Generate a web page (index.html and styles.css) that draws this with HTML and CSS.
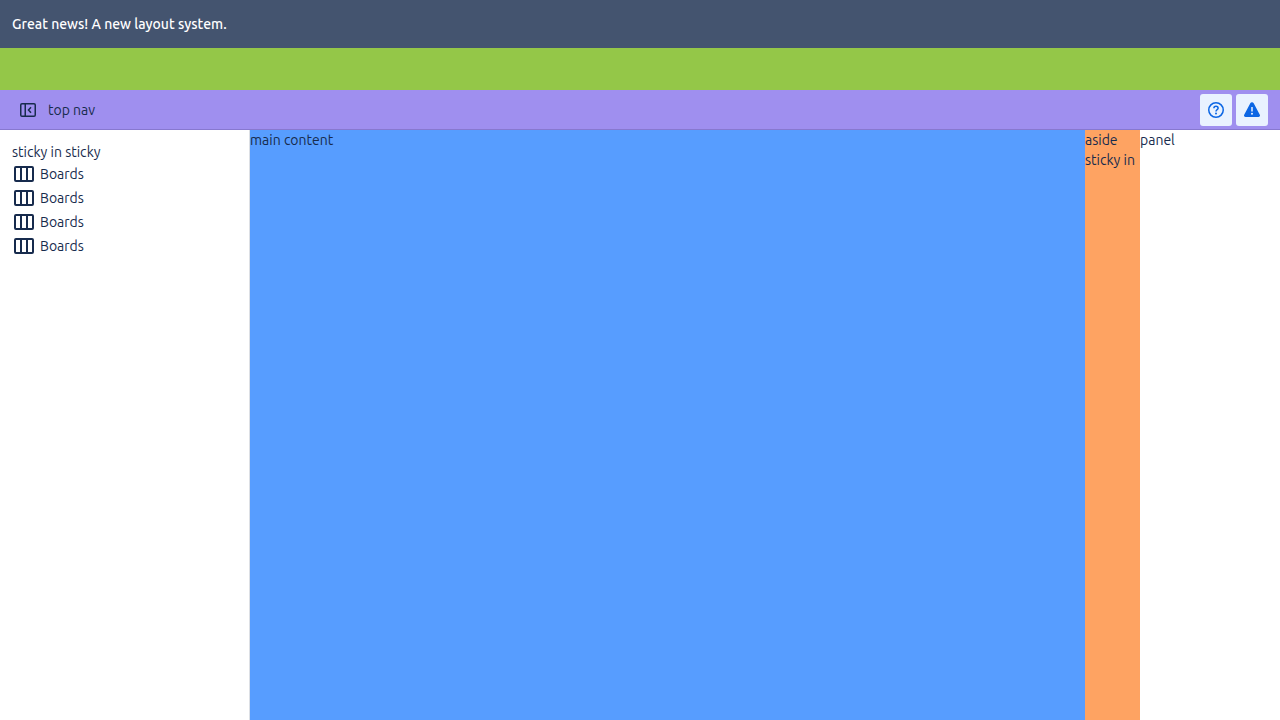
FILE: index.html
```html
<!DOCTYPE html>
<html lang="en">
<head>
<meta charset="utf-8">
<meta name="viewport" content="width=device-width, initial-scale=1">
<title>Layout system</title>
<link rel="stylesheet" href="styles.css">
</head>
<body>
<div class="page">
  <div class="banner">Great news! A new layout system.</div>
  <div class="announcement"></div>
  <header class="top-nav">
    <div class="nav-start">
      <button class="toggle" type="button" aria-label="Collapse side nav">
        <svg width="16" height="16" viewBox="0 0 16 16" fill="none" stroke="currentColor" stroke-width="1.5"><rect x=".75" y="1.75" width="14.5" height="12.5" rx="1.25"/><path d="M5.25 2v12M11 5.300 8.500 8l2.500 2.700"/></svg>
      </button>
      <span>top nav</span>
    </div>
    <div class="nav-end">
      <button class="action" type="button" aria-label="Help">
        <svg width="16" height="16" viewBox="0 0 16 16" fill="none" stroke="currentColor" stroke-width="1.5"><circle cx="8" cy="8" r="7.25"/><path d="M5.900 6.300C5.900 5 6.800 4.200 8 4.200s2.100.8 2.100 2C10.100 7.600 8 7.700 8 9.400"/><circle cx="8" cy="11.500" r="1" fill="currentColor" stroke="none"/></svg>
      </button>
      <button class="action" type="button" aria-label="Alerts">
        <svg width="16" height="16" viewBox="0 0 16 16"><path fill="currentColor" fill-rule="evenodd" d="M6.300 1.200a1.950 1.950 0 0 1 3.400 0l6.100 11.600a1.500 1.500 0 0 1-1.300 2.200H1.500a1.500 1.500 0 0 1-1.300-2.200ZM7.250 5v4.500h1.500V5ZM8 10.700a1 1 0 1 0 0 2 1 1 0 0 0 0-2Z"/></svg>
      </button>
    </div>
  </header>
  <div class="body">
    <nav class="side-nav">
      <div>sticky in sticky</div>
      <ul class="boards">
        <li class="board"><svg class="board-icon" viewBox="0 0 24 24" fill="none" stroke="currentColor" stroke-width="2"><rect x="3" y="5" width="18" height="14" rx="1"/><path d="M9 5v14M15 5v14"/></svg>Boards</li>
        <li class="board"><svg class="board-icon" viewBox="0 0 24 24" fill="none" stroke="currentColor" stroke-width="2"><rect x="3" y="5" width="18" height="14" rx="1"/><path d="M9 5v14M15 5v14"/></svg>Boards</li>
        <li class="board"><svg class="board-icon" viewBox="0 0 24 24" fill="none" stroke="currentColor" stroke-width="2"><rect x="3" y="5" width="18" height="14" rx="1"/><path d="M9 5v14M15 5v14"/></svg>Boards</li>
        <li class="board"><svg class="board-icon" viewBox="0 0 24 24" fill="none" stroke="currentColor" stroke-width="2"><rect x="3" y="5" width="18" height="14" rx="1"/><path d="M9 5v14M15 5v14"/></svg>Boards</li>
      </ul>
    </nav>
    <main class="main">main content</main>
    <aside class="aside">aside<br>sticky in</aside>
    <section class="panel">panel</section>
  </div>
</div>
</body>
</html>
```
FILE: styles.css
```css
* {
  box-sizing: border-box;
}

body {
  margin: 0;
  background: #ffffff;
  color: #172b4d;
  font-family: Ubuntu, "Noto Sans", "Open Sans", sans-serif;
  font-size: 14px;
  line-height: 20px;
}

.page {
  display: flex;
  flex-direction: column;
  min-height: 100vh;
}

.banner {
  padding: 14px 12px;
  background: #44546f;
  color: #ffffff;
  font-weight: 500;
}

.announcement {
  height: 42px;
  background: #94c748;
}

.top-nav {
  display: flex;
  align-items: center;
  justify-content: space-between;
  height: 40px;
  padding: 0 12px;
  border-bottom: 1px solid #8778cf;
  background: #9f8fef;
}

.nav-start,
.nav-end {
  display: flex;
  align-items: center;
  gap: 4px;
}

.toggle,
.action {
  display: flex;
  align-items: center;
  justify-content: center;
  width: 32px;
  height: 32px;
  padding: 0;
  border: 0;
  border-radius: 3px;
  background: #e9f2ff;
  color: #0c66e4;
}

.toggle {
  background: transparent;
  color: #172b4d;
}

.body {
  display: flex;
  flex: 1;
}

.side-nav {
  flex: 0 0 250px;
  padding: 12px;
  border-right: 1px solid #dcdfe4;
}

.boards {
  margin: 0;
  padding: 0;
  list-style: none;
}

.board {
  display: flex;
  align-items: center;
  gap: 4px;
  height: 24px;
}

.board-icon {
  width: 24px;
  height: 24px;
}

.main {
  flex: 1;
  background: #579dff;
}

.aside {
  flex: 0 0 55px;
  background: #fea362;
  white-space: nowrap;
}

.panel {
  flex: 0 0 140px;
}
```
